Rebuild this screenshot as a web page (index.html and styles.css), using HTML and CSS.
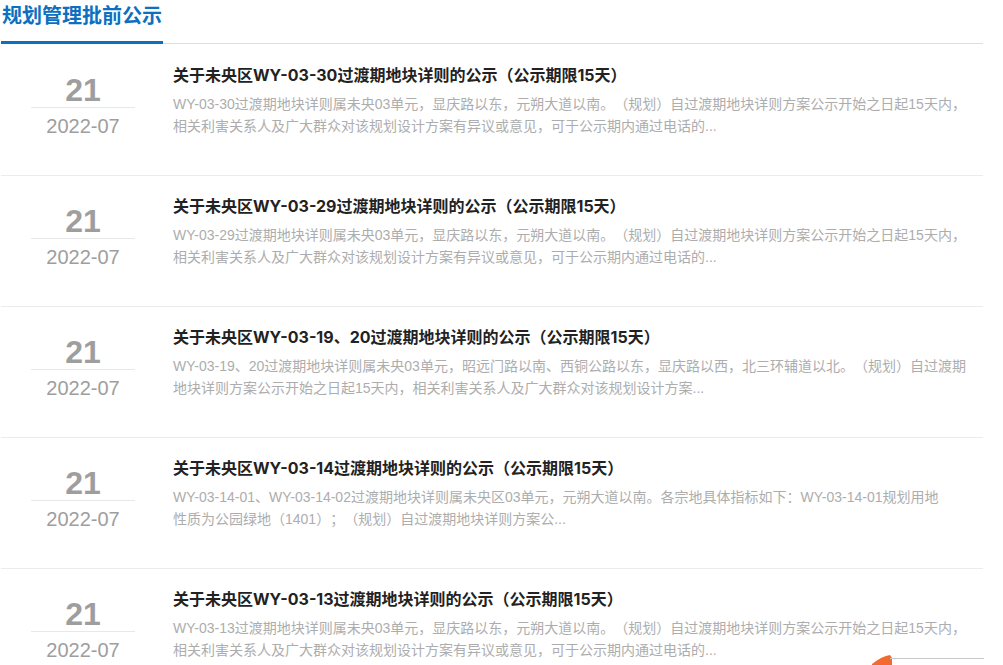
FILE: index.html
```html
<!DOCTYPE html>
<html lang="zh-CN">
<head>
    <meta charset="UTF-8">
    <meta name="viewport" content="width=device-width, initial-scale=1.0">
    <title>规划管理批前公示</title>
    <link rel="stylesheet" href="styles.css">
</head>
<body>
    <div class="wrap">
        <div class="head">
            <h2>规划管理批前公示</h2>
        </div>
        <ul class="list">
            <li class="item">
                <div class="date">
                    <div class="day">21</div>
                    <div class="month">2022-07</div>
                </div>
                <div class="info">
                    <h3 class="title">关于未央区WY-03-30过渡期地块详则的公示（公示期限15天）</h3>
                    <p class="desc">WY-03-30过渡期地块详则属未央03单元，显庆路以东，元朔大道以南。（规划）自过渡期地块详则方案公示开始之日起15天内，相关利害关系人及广大群众对该规划设计方案有异议或意见，可于公示期内通过电话的...</p>
                </div>
            </li>
            <li class="item">
                <div class="date">
                    <div class="day">21</div>
                    <div class="month">2022-07</div>
                </div>
                <div class="info">
                    <h3 class="title">关于未央区WY-03-29过渡期地块详则的公示（公示期限15天）</h3>
                    <p class="desc">WY-03-29过渡期地块详则属未央03单元，显庆路以东，元朔大道以南。（规划）自过渡期地块详则方案公示开始之日起15天内，相关利害关系人及广大群众对该规划设计方案有异议或意见，可于公示期内通过电话的...</p>
                </div>
            </li>
            <li class="item">
                <div class="date">
                    <div class="day">21</div>
                    <div class="month">2022-07</div>
                </div>
                <div class="info">
                    <h3 class="title">关于未央区WY-03-19、20过渡期地块详则的公示（公示期限15天）</h3>
                    <p class="desc">WY-03-19、20过渡期地块详则属未央03单元，昭远门路以南、西铜公路以东，显庆路以西，北三环辅道以北。（规划）自过渡期地块详则方案公示开始之日起15天内，相关利害关系人及广大群众对该规划设计方案...</p>
                </div>
            </li>
            <li class="item">
                <div class="date">
                    <div class="day">21</div>
                    <div class="month">2022-07</div>
                </div>
                <div class="info">
                    <h3 class="title">关于未央区WY-03-14过渡期地块详则的公示（公示期限15天）</h3>
                    <p class="desc">WY-03-14-01、WY-03-14-02过渡期地块详则属未央区03单元，元朔大道以南。各宗地具体指标如下：WY-03-14-01规划用地<br>性质为公园绿地（1401）；（规划）自过渡期地块详则方案公...</p>
                </div>
            </li>
            <li class="item">
                <div class="date">
                    <div class="day">21</div>
                    <div class="month">2022-07</div>
                </div>
                <div class="info">
                    <h3 class="title">关于未央区WY-03-13过渡期地块详则的公示（公示期限15天）</h3>
                    <p class="desc">WY-03-13过渡期地块详则属未央03单元，显庆路以东，元朔大道以南。（规划）自过渡期地块详则方案公示开始之日起15天内，相关利害关系人及广大群众对该规划设计方案有异议或意见，可于公示期内通过电话的...</p>
                </div>
            </li>
        </ul>
    </div>
    <div class="float-tab">
        <svg width="112" height="10" viewBox="0 0 112 10">
            <path d="M0 9 Q10 1 18 0 L20 3 L20 10 L0 10 Z" fill="#f26a2e"/>
            <line x1="18" y1="3.5" x2="112" y2="3.5" stroke="#c8c8c8" stroke-width="1"/>
        </svg>
    </div>
</body>
</html>
```

FILE: styles.css
```css
body {
    margin: 0;
    font-family: "Liberation Sans", "Noto Sans CJK SC", sans-serif;
    color: #333;
    background-color: #fff;
    overflow: hidden;
    text-spacing-trim: space-all;
}
.wrap {
    width: 982px;
    margin-left: 1px;
}
.head {
    border-bottom: 1px solid #dedede;
    height: 43px;
}
.head h2 {
    display: inline-block;
    margin: 0;
    padding: 0 1px 9px 1px;
    font-size: 20px;
    line-height: 32px;
    font-weight: bold;
    color: #0d6fc0;
    border-bottom: 3px solid #0d6fc0;
}
.list {
    list-style: none;
    margin: 0;
    padding: 1px 0 0 0;
}
.item {
    display: flex;
    height: 130px;
    padding-right: 6px;
    border-bottom: 1px solid #ececec;
}
.date {
    width: 104px;
    flex-shrink: 0;
    margin: 28px 38px 0 30px;
    text-align: center;
    color: #9e9e9e;
}
.day {
    font-size: 32px;
    line-height: 34px;
    font-weight: bold;
    border-bottom: 1px solid #e8e8e8;
}
.month {
    font-size: 20px;
    line-height: 36px;
}
.info {
    flex: 1;
    padding-top: 18px;
}
.title {
    margin: 0;
    font-family: "Inter", "Noto Sans CJK SC", sans-serif;
    font-size: 16px;
    line-height: 24px;
    font-weight: bold;
    color: #222;
}
.desc {
    margin: 6px 0 0 0;
    font-size: 14px;
    line-height: 22px;
    color: #adadad;
}
.float-tab {
    position: absolute;
    left: 872px;
    top: 655px;
    line-height: 0;
}
```
